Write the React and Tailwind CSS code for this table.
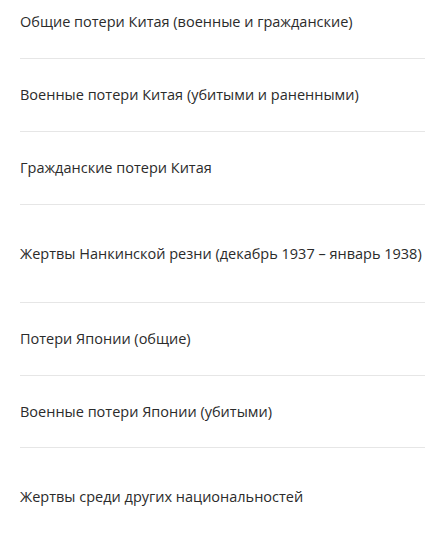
import React from 'react';

const rows = [
  { label: 'Общие потери Китая (военные и гражданские)', h: 'h-[59px] pt-3 pb-[26px]' },
  { label: 'Военные потери Китая (убитыми и раненными)', h: 'h-[73px]' },
  { label: 'Гражданские потери Китая', h: 'h-[73px]' },
  { label: 'Жертвы Нанкинской резни (декабрь 1937 – январь 1938)', h: 'h-[98px]' },
  { label: 'Потери Японии (общие)', h: 'h-[73px]' },
  { label: 'Военные потери Японии (убитыми)', h: 'h-[72px]' },
  { label: 'Жертвы среди других национальностей', h: 'h-[98px]', last: true },
];

export default function App() {
  return (
    <div className="min-h-screen bg-white font-['Open_Sans',sans-serif] text-[14.5px] text-[#2b2b2b]">
      <ul className="pl-5">
        {rows.map((row) => (
          <li
            key={row.label}
            className={`flex items-center ${row.h} ${row.last ? '' : 'border-b border-[#e6e6e6]'}`}
          >
            <span className="leading-5">{row.label}</span>
          </li>
        ))}
      </ul>
    </div>
  );
}
